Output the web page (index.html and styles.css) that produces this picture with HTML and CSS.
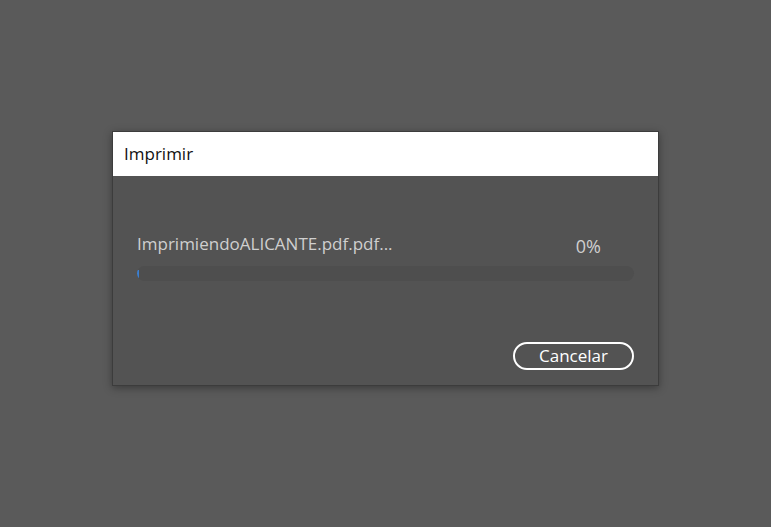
FILE: index.html
```html
<!DOCTYPE html>
<html>
<head>
<meta charset="utf-8">
<link rel="stylesheet" href="styles.css">
</head>
<body>
<div class="dialog">
  <div class="titlebar">Imprimir</div>
  <div class="content">
    <div class="row">
      <span class="file">ImprimiendoALICANTE.pdf.pdf...</span>
      <span class="pct">0%</span>
    </div>
    <div class="track"><div class="fill"></div></div>
    <div class="actions">
      <button class="btn">Cancelar</button>
    </div>
  </div>
</div>
</body>
</html>
```
FILE: styles.css
```css
html, body {
  margin: 0;
  padding: 0;
  width: 771px;
  height: 527px;
  background: #5a5a5a;
  font-family: "Open Sans", "Noto Sans", sans-serif;
  overflow: hidden;
}
body {
  padding-top: 131px;
  padding-left: 112px;
  box-sizing: border-box;
}
.dialog {
  width: 547px;
  height: 255px;
  box-sizing: border-box;
  border: 1px solid #3c3c3c;
  background: #535353;
  box-shadow: 0 2px 8px rgba(0,0,0,0.35);
  display: flex;
  flex-direction: column;
}
.titlebar {
  height: 44px;
  background: #ffffff;
  color: #111;
  font-size: 17px;
  line-height: 44px;
  padding-left: 11px;
}
.content {
  padding: 56px 24px 0 24px;
  display: flex;
  flex-direction: column;
}
.row {
  display: flex;
  justify-content: space-between;
  align-items: baseline;
  color: #cfcfcf;
  font-size: 17px;
  line-height: 22px;
}
.pct {
  margin-right: 33px;
  font-size: 18px;
  position: relative;
  top: 3px;
}
.track {
  margin-top: 11px;
  height: 15px;
  border-radius: 8px;
  background: #4e4e4e;
  position: relative;
  overflow: hidden;
}
.fill {
  width: 2px;
  height: 8px;
  margin-top: 4px;
  background: #3b7fd0;
}
.actions {
  display: flex;
  justify-content: flex-end;
  margin-top: 61px;
}
.btn {
  width: 121px;
  height: 28px;
  border: 2px solid #ffffff;
  border-radius: 14px;
  background: transparent;
  color: #ffffff;
  font-family: "Open Sans", "Noto Sans", sans-serif;
  font-size: 17px;
  line-height: 22px;
  padding: 0;
}
```
